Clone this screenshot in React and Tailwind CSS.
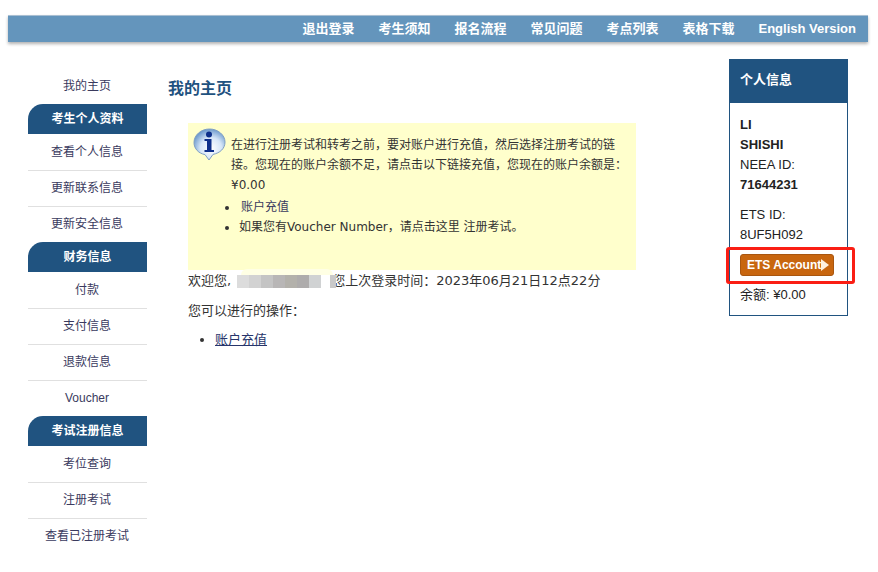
import React from 'react';

const sideMenu = [
  { label: '我的主页', first: true },
  { label: '考生个人资料', head: true },
  { label: '查看个人信息', first: true },
  { label: '更新联系信息' },
  { label: '更新安全信息' },
  { label: '财务信息', head: true },
  { label: '付款', first: true },
  { label: '支付信息' },
  { label: '退款信息' },
  { label: 'Voucher' },
  { label: '考试注册信息', head: true },
  { label: '考位查询', first: true },
  { label: '注册考试' },
  { label: '查看已注册考试' },
];

const navLinks = ['退出登录', '考生须知', '报名流程', '常见问题', '考点列表', '表格下载', 'English Version'];

const blurBlocks = ['bg-[#dcdcdc]', 'bg-[#d2d2d2]', 'bg-[#c4c4c4]', 'bg-[#b8b6b6]', 'bg-[#b3b1ab]', 'bg-[#aeacac]', 'bg-[#d0d2d3]'];

function InfoIcon() {
  return (
    <svg width="33" height="33" viewBox="0 0 33 33" className="shrink-0 ml-[5px] mr-[5px] mt-[5px]">
      <defs>
        <radialGradient id="bubble" cx="0.55" cy="0.62" r="0.62">
          <stop offset="0" stopColor="#ffffff" />
          <stop offset="0.55" stopColor="#d6e6f8" />
          <stop offset="1" stopColor="#6a98cc" />
        </radialGradient>
      </defs>
      <path d="M16.5 1C8 1 1 7 1 14.5 1 21 5.8 25.4 12 26.6L16 32 20 26.4C27 25 32 20.6 32 14 32 7 25 1 16.5 1Z" fill="url(#bubble)" stroke="#7f9fc4" strokeWidth="1" />
      <circle cx="16" cy="6.5" r="3" fill="#0d2f8a" />
      <path d="M11.5 11H18.5V22H21V24H11.5V22H14V13H11.5Z" fill="#0d2f8a" />
    </svg>
  );
}

function SideMenu() {
  return (
    <div className="w-[119px] mt-[26px] shrink-0 text-[12px] text-center">
      {sideMenu.map((item) =>
        item.head ? (
          <div key={item.label} className="h-[30px] leading-[30px] bg-[#205380] text-white font-bold rounded-tl-[15px]">
            {item.label}
          </div>
        ) : (
          <div
            key={item.label}
            className={`h-[36px] pr-px text-[#3a3a5e] ${item.first ? 'leading-[37px]' : 'leading-[35px] border-t border-[#e0e0e0]'}`}
          >
            {item.label}
          </div>
        )
      )}
    </div>
  );
}

function Notice() {
  return (
    <div className="flex ml-[20px] mt-[22px] w-[448px] h-[147px] bg-[#ffffcc] text-[12px] leading-[20px] text-[#333]">
      <InfoIcon />
      <div className="w-[400px] pt-[12px]">
        <p>在进行注册考试和转考之前，要对账户进行充值，然后选择注册考试的链接。您现在的账户余额不足，请点击以下链接充值，您现在的账户余额是：¥0.00</p>
        <ul className="list-disc pl-[8px] mt-[2px]">
          <li className="pl-[2px]"><span className="text-[#3a3a5e]">账户充值</span></li>
          <li>如果您有Voucher Number，请点击这里 注册考试。</li>
        </ul>
      </div>
    </div>
  );
}

function MainContent() {
  return (
    <div className="w-[540px] mx-[21px] shrink-0 font-['DejaVu_Sans','Noto_Sans_CJK_SC',sans-serif]">
      <h1 className="mt-[35px] text-[16px] leading-[24px] font-bold text-[#1f5280]">我的主页</h1>
      <Notice />
      <div className="ml-[20px] text-[13px] leading-[20px] text-[#333]">
        <div className="flex items-center mt-[1px]">
          <span>欢迎您,</span>
          <span className="relative flex ml-[6px] -mr-[4px] h-[13px] z-10">
            <span className="absolute left-[4px] bottom-[13px] w-[92px] h-[6px] bg-[#ffffe4] rounded-t-[6px]" />
            {blurBlocks.map((c) => (
              <span key={c} className={`w-[12px] h-[13px] first:rounded-l-[5px] ${c}`} />
            ))}
            <span className="w-[9px] h-[13px] bg-[#ffffff]" />
            <span className="w-[6px] h-[13px] bg-[#c9c9c9]" />
          </span>
          <span>您上次登录时间：2023年06月21日12点22分</span>
        </div>
        <p className="mt-[10px]">您可以进行的操作：</p>
        <ul className="list-disc pl-[27px] mt-[9px]">
          <li><span className="underline text-[#27356b]">账户充值</span></li>
        </ul>
      </div>
    </div>
  );
}

function InfoPanel() {
  return (
    <div className="relative w-[119px] h-[257px] mt-[17px] shrink-0 border border-[#205380] text-[13px] leading-[20px] text-[#222]">
      <div className="h-[44px] -mx-px -mt-px mb-[12px] pl-[11px] bg-[#205380] text-white font-bold leading-[42px]">
        个人信息
      </div>
      <div className="pl-[10px]">
        <div className="font-bold">LI</div>
        <div className="font-bold">SHISHI</div>
        <div>NEEA ID:</div>
        <div className="font-bold">71644231</div>
        <div className="mt-[10px]">ETS ID:</div>
        <div>8UF5H092</div>
        <button className="flex items-center mt-[9px] w-[94px] h-[22px] pl-[6px] bg-[#c8660f] border border-[#a9560f] rounded-[3px] text-white text-[12px] font-bold">
          ETS Account
          <svg width="8" height="12" viewBox="0 0 8 12" className="shrink-0">
            <path d="M0 0L8 6L0 12Z" fill="#fff2e0" />
          </svg>
        </button>
        <div className="mt-[9px]">余额: ¥0.00</div>
      </div>
      <div className="absolute left-[-4px] top-[187px] w-[129px] h-[37px] border-[3px] border-[#fa1e14] rounded-[3px]" />
    </div>
  );
}

export default function App() {
  return (
    <div className="w-[878px] h-[572px] bg-white overflow-hidden font-['Liberation_Sans','Noto_Sans_CJK_SC',sans-serif]">
      <div className="pt-[15px] pl-[8px] pr-[10px]">
        <div className="h-[27px] flex justify-end items-center gap-[24px] pr-[12px] bg-[#6495bc] border-t border-[#a9bfd2] shadow-[0_2px_3px_rgba(0,0,0,0.3)] text-white text-[13px] font-bold">
          {navLinks.map((n) => (
            <span key={n}>{n}</span>
          ))}
        </div>
      </div>
      <div className="flex pl-[28px]">
        <SideMenu />
        <MainContent />
        <InfoPanel />
      </div>
    </div>
  );
}
